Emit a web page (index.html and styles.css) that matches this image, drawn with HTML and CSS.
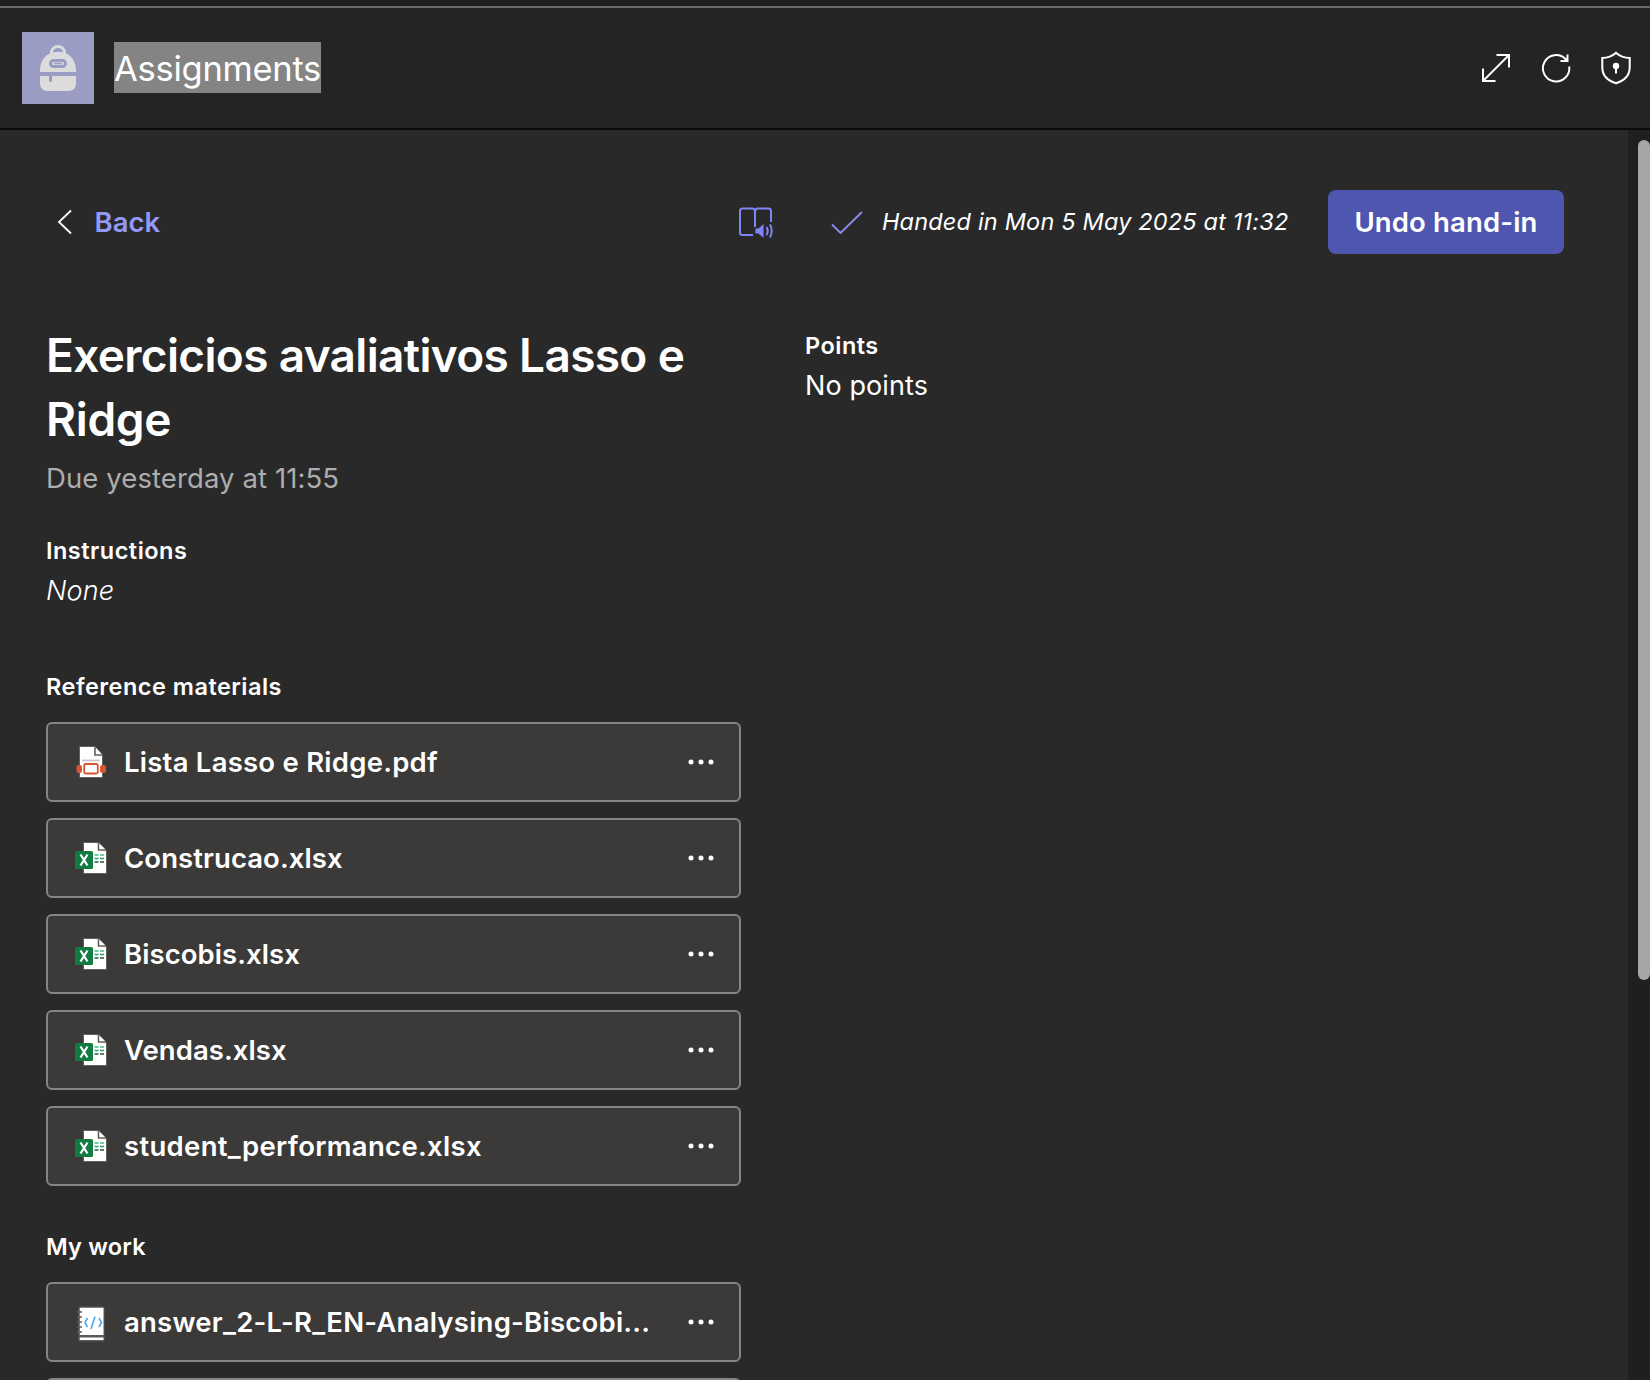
FILE: index.html
```html
<!DOCTYPE html>
<html lang="en">
<head>
<meta charset="utf-8">
<title>Assignments</title>
<link rel="stylesheet" href="styles.css">
</head>
<body>
<svg class="sprite" aria-hidden="true">
  <symbol id="excel" viewBox="0 0 40 40">
    <path d="M13.500 4.500H27.500L36.500 13V35.500H13.500Z" fill="#fff" stroke="#605f5e" stroke-width="1"/>
    <path d="M28.500 4.500V12H36" fill="#fff" stroke="#605f5e" stroke-width="1.600"/>
    <path d="M24.500 17h4M30 17h4" stroke="#33c481" stroke-width="1.600"/>
    <path d="M24.500 20.500h4M30 20.500h4" stroke="#21a366" stroke-width="1.600"/>
    <path d="M24.500 24h4M30 24h4" stroke="#185c37" stroke-width="1.600"/>
    <rect x="5" y="13" width="18" height="18" rx="1.500" fill="#107c41"/>
    <path d="M10.500 16.500L17.500 27.500M17.500 16.500L10.500 27.500" stroke="#fff" stroke-width="2.200"/>
  </symbol>
  <symbol id="dots" viewBox="0 0 26 6">
    <circle cx="3" cy="3" r="2.500"/><circle cx="13" cy="3" r="2.500"/><circle cx="23" cy="3" r="2.500"/>
  </symbol>
</svg>
<div class="strip"></div>
<header class="header">
  <svg class="app-icon" viewBox="0 0 72 72">
    <rect width="72" height="72" fill="#9a9cc4"/>
    <path d="M29.500 22.500V20.500a6.500 6 0 0 1 13 0V22.500" fill="none" stroke="#dcdcdc" stroke-width="3"/>
    <path d="M18 40V38C18 29 23.500 22 31 20.500Q36 19 41 20.500C48.500 22 54 29 54 38V40Z" fill="#dcdcdc"/>
    <path d="M32 19.500a4.500 3.500 0 0 1 8 0Z" fill="#9a9cc4"/>
    <rect x="28.500" y="28.500" width="15" height="6" rx="3" fill="#dcdcdc" stroke="#9a9cc4" stroke-width="3"/>
    <path d="M32 31.500h8" stroke="#9a9cc4" stroke-width="1.500"/>
    <path d="M18 44H54V51Q54 59 46 59H26Q18 59 18 51Z" fill="#dcdcdc"/>
    <path d="M28.500 43V48.500" stroke="#9a9cc4" stroke-width="3" stroke-linecap="round"/>
  </svg>
  <span class="app-name">Assignments</span>
  <div class="tools">
    <svg class="tool" viewBox="0 0 36 36"><path d="M5 31L31 5M18.500 5H31V17.500M5 18.500V31H17.500"/></svg>
    <svg class="tool" viewBox="0 0 36 36"><path d="M31.200 16.500A13.200 13.200 0 1 1 27.500 9L29 10.500M29.500 4.500V11H22.500"/></svg>
    <svg class="tool" viewBox="0 0 36 36"><path d="M18 2.800C21.500 6 26.500 8 31.700 8V17.500C31.700 25 26.500 30.500 18 33.200C9.500 30.500 4.300 25 4.300 17.500V8C9.500 8 14.500 6 18 2.800ZM18 16V23.500"/><circle class="solid" cx="18" cy="16" r="3.200"/></svg>
  </div>
</header>
<div class="view">
  <main class="main">
    <div class="bar">
      <svg class="chev" viewBox="0 0 16 26"><path d="M14 1.500L2 13L14 24.500"/></svg>
      <a class="back">Back</a>
      <svg class="reader" viewBox="0 0 36 32">
        <path d="M15 28H4.500Q2 28 2 25.500V4Q2 1.500 4.500 1.500H14Q17 1.500 17 4.500V20M17 4.500Q17 1.500 20 1.500H30.500Q33 1.500 33 4V15"/>
        <path class="solid" d="M17.500 21.500H20.500L25.500 17V31L20.500 26.500H17.500Z"/>
        <path d="M28.500 20Q31 24 28.500 28M32 17.500Q35.500 24 32 30.500"/>
      </svg>
      <svg class="check" viewBox="0 0 32 24"><path d="M1 13.500L9.500 22L31 1"/></svg>
      <span class="status">Handed in Mon 5 May 2025 at 11:32</span>
      <button class="undo">Undo hand-in</button>
    </div>
    <div class="columns">
      <section class="left">
        <h1 class="title">Exercicios avaliativos Lasso e <span class="title-end">Ridge</span></h1>
        <p class="due">Due yesterday at 11:55</p>
        <h2 class="label instr">Instructions</h2>
        <p class="text none">None</p>
        <h2 class="label refs">Reference materials</h2>
        <ul class="files">
          <li class="file"><svg class="ficon" viewBox="0 0 40 40"><path d="M9.500 4.500H24.500L32.500 13V35.500H9.500Z" fill="#fff" stroke="#605f5e"/><path d="M25 4.500V13H32.500" fill="#fff" stroke="#605f5e" stroke-width="1.600"/><path d="M12 18.500H30" stroke="#c8c8c8" stroke-width="1.800"/><rect x="6.500" y="23" width="5.500" height="8" rx="2.200" fill="#d65532"/><rect x="30" y="23" width="6" height="8" rx="2.200" fill="#d65532"/><rect x="14.200" y="22" width="13.600" height="9.500" rx="1.500" fill="#fff" stroke="#d65532" stroke-width="1.800"/></svg><span class="name wide">Lista Lasso e Ridge.pdf</span><svg class="more"><use href="#dots"/></svg></li>
          <li class="file"><svg class="ficon"><use href="#excel"/></svg><span class="name">Construcao.xlsx</span><svg class="more"><use href="#dots"/></svg></li>
          <li class="file"><svg class="ficon"><use href="#excel"/></svg><span class="name">Biscobis.xlsx</span><svg class="more"><use href="#dots"/></svg></li>
          <li class="file"><svg class="ficon"><use href="#excel"/></svg><span class="name">Vendas.xlsx</span><svg class="more"><use href="#dots"/></svg></li>
          <li class="file"><svg class="ficon"><use href="#excel"/></svg><span class="name wider">student_performance.xlsx</span><svg class="more"><use href="#dots"/></svg></li>
        </ul>
        <h2 class="label work">My work</h2>
        <ul class="files">
          <li class="file"><svg class="ficon" viewBox="0 0 40 40"><rect x="8.500" y="4.500" width="26" height="35" rx="1.500" fill="#5c5b5a"/><path d="M9.800 5.800H33.500V33H9.800Z" fill="#fff"/><path d="M9.800 35.500H33.500V38H9.800Z" fill="#fff"/><path d="M7 10h5M7 15h5M7 20h5M7 25h5M7 30h5" stroke="#5c5b5a" stroke-width="1.500"/><path d="M17.500 16L15 20.500L17.500 25M29 16L31.500 20.500L29 25M25 14.500L21 27" fill="none" stroke="#50a8e8" stroke-width="1.600"/></svg><span class="name wide">answer_2-L-R_EN-Analysing-Biscobi...</span><svg class="more"><use href="#dots"/></svg></li>
          <li class="file"></li>
        </ul>
      </section>
      <section class="right">
        <h2 class="label">Points</h2>
        <p class="text">No points</p>
      </section>
    </div>
  </main>
  <div class="track"><div class="thumb"></div></div>
</div>
</body>
</html>
```
FILE: styles.css
```css
* { box-sizing: border-box; }
body {
  margin: 0;
  height: 1380px;
  overflow: hidden;
  display: flex;
  flex-direction: column;
  background: #292929;
  color: #fff;
  font-family: Inter, "Liberation Sans", sans-serif;
}
h1, h2, p, ul { margin: 0; padding: 0; }
svg { display: block; flex: none; }
.sprite { position: absolute; width: 0; height: 0; }
.strip { flex: none; height: 8px; background: #1f1f1f; border-bottom: 2px solid #6b6b6b; }
.header {
  flex: none;
  height: 122px;
  padding: 24px 16px 0 22px;
  display: flex;
  background: #242424;
  border-bottom: 2px solid #0a0a0a;
}
.app-icon { width: 72px; height: 72px; }
.app-name {
  margin: 10px 0 0 20px;
  width: 207px;
  height: 51px;
  line-height: 53px;
  font-size: 34.5px;
  letter-spacing: -0.27px;
  background: #848484;
}
.tools { margin: 18px 0 0 auto; display: flex; gap: 24px; }
.tool { width: 36px; height: 36px; fill: none; stroke: #fff; stroke-width: 2; }
.solid { fill: currentColor; stroke: none; }
.view { flex: 1; min-height: 0; display: flex; }
.main { flex: 1; min-width: 0; padding: 60px 64px 0 46px; overflow: hidden; }
.track { width: 22px; padding: 10px 0 0 10px; background: #1f1f1f; }
.thumb { width: 12px; height: 840px; border-radius: 6px; background: #a6a6a6; }
.bar { height: 64px; display: flex; align-items: center; }
.chev { width: 16px; height: 26px; margin-left: 11px; fill: none; stroke: #fff; stroke-width: 1.800; }
.back { margin-left: 21.5px; font-size: 27.5px; font-weight: 600; color: #9299f7; }
.reader { width: 36px; height: 32px; margin: 2px 0 0 auto; color: #7f85f5; fill: none; stroke: #7f85f5; stroke-width: 2; }
.check { width: 32px; height: 24px; margin: 2px 0 0 57px; fill: none; stroke: #8a90f0; stroke-width: 1.800; }
.status { margin: -2px 0 0 19px; font-size: 23.5px; letter-spacing: 0.18px; font-style: italic; }
.undo {
  width: 236px;
  height: 64px;
  padding: 0;
  margin-left: 39.5px;
  border: 0;
  border-radius: 8px;
  background: #4f56b0;
  color: #fff;
  font: 600 27.5px Inter, sans-serif;
  letter-spacing: 0.15px;
}
.columns { display: grid; grid-template-columns: 695px 1fr; gap: 64px; margin-top: 69px; }
.title { font-size: 46px; line-height: 64px; font-weight: 600; letter-spacing: -0.67px; }
.title-end { letter-spacing: -0.3px; }
.due { margin-top: 7px; font-size: 27.5px; line-height: 40px; letter-spacing: 0.1px; color: #adadad; }
.label { font-size: 23.5px; line-height: 32px; font-weight: 600; letter-spacing: 0.48px; }
.text { margin-top: 4px; font-size: 27px; line-height: 40px; letter-spacing: 0.1px; }
.none { font-style: italic; font-weight: 300; }
.instr { margin-top: 37px; }
.refs { margin-top: 60px; }
.work { margin-top: 45px; letter-spacing: 0.2px; }
.files { margin-top: 19px; display: flex; flex-direction: column; gap: 16px; list-style: none; }
.file {
  flex: none;
  height: 80px;
  padding: 0 25px 0 24px;
  display: flex;
  align-items: center;
  border: 2px solid #858585;
  border-radius: 6px;
  background: #3b3a38;
}
.ficon { width: 40px; height: 40px; margin-left: -2px; }
.name { margin-left: 14px; font-size: 27.5px; font-weight: 600; letter-spacing: 0.07px; white-space: nowrap; }
.wide { letter-spacing: 0.24px; }
.wider { letter-spacing: 0.32px; }
.more { width: 26px; height: 6px; margin-left: auto; fill: #fff; }
.right { padding-top: 7px; }
```
